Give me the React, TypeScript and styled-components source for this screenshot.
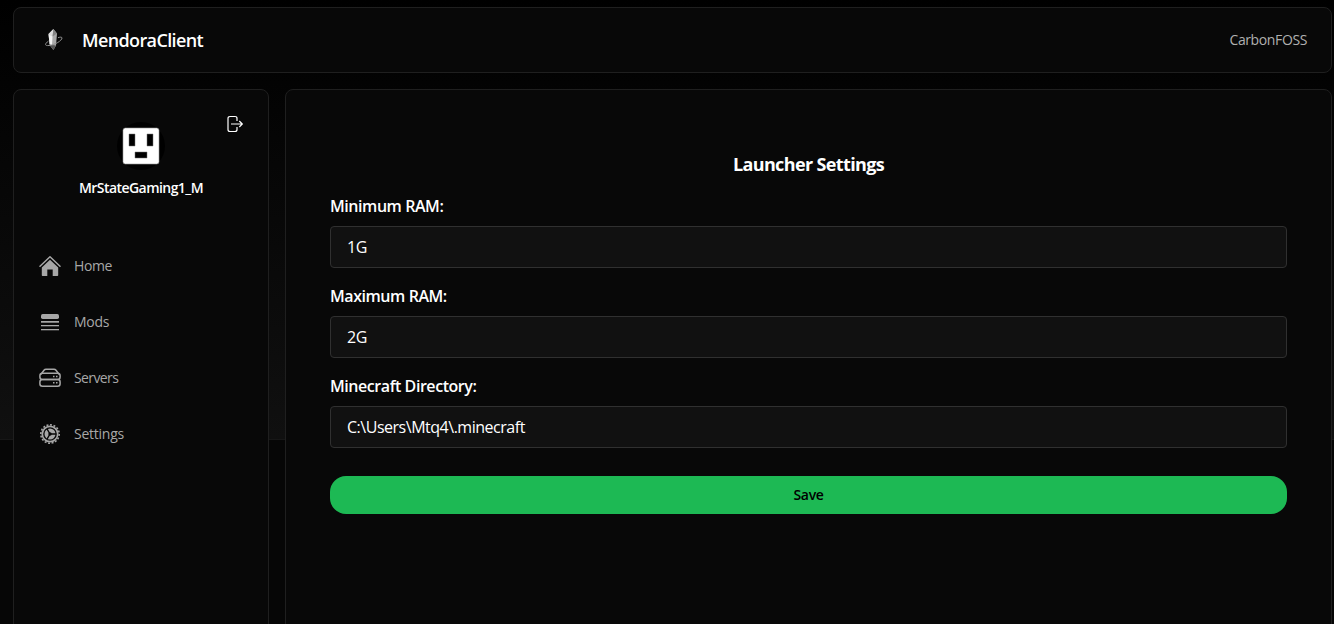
import React from "react";
import styled, { createGlobalStyle } from "styled-components";

const GlobalStyle = createGlobalStyle`
  * { box-sizing: border-box; }
  body {
    margin: 0;
    overflow: hidden;
    background: #060606;
    color: #fff;
    font-family: "Segoe UI", "Open Sans", "Noto Sans", sans-serif;
  }
`;

const Page = styled.div`
  height: 624px;
  padding: 7px 2px 0 13px;
  display: flex;
  flex-direction: column;
  gap: 16px;
  overflow: hidden;
  background: linear-gradient(#000, #101010) 0 0 / 100% 439px no-repeat,
    linear-gradient(#171717, #171717) 0 439px / 100% 1px no-repeat, #060606;
`;

const Panel = styled.div`
  background: #080808;
  border: 1px solid #1f1f1f;
  border-radius: 8px;
`;

const Header = styled(Panel)`
  height: 66px;
  flex: none;
  display: flex;
  align-items: center;
  padding: 0 24px 0 28px;
`;

const Label = styled.span<{ $size: number; $weight?: number; $track?: number; $color?: string }>`
  font-size: ${(p) => p.$size}px;
  font-weight: ${(p) => p.$weight ?? 400};
  letter-spacing: ${(p) => p.$track ?? 0}px;
  color: ${(p) => p.$color ?? "#fff"};
  line-height: 20px;
  white-space: nowrap;
`;

const Brand = styled.div`
  flex: 1;
  display: flex;
  align-items: center;
  gap: 16px;
`;

const Body = styled.div`
  flex: none;
  height: 560px;
  display: flex;
  gap: 16px;
`;

const Sidebar = styled(Panel)`
  width: 256px;
  flex: none;
`;

const Profile = styled.div`
  position: relative;
  padding-top: 32px;
  height: 148px;
  display: flex;
  flex-direction: column;
  align-items: center;
  gap: 8px;
`;

const Avatar = styled.div`
  width: 48px;
  height: 48px;
  border-radius: 50%;
  background: #000;
  display: grid;
  place-items: center;
`;

const LogoutButton = styled.button`
  position: absolute;
  top: 25px;
  right: 24px;
  padding: 0;
  border: 0;
  background: none;
  display: flex;
`;

const Nav = styled.nav`
  display: flex;
  flex-direction: column;
`;

const NavItem = styled.a`
  height: 56px;
  padding-left: 25px;
  display: flex;
  align-items: center;
  gap: 13px;
  color: #a7a7a7;
  svg { width: 22px; height: 22px; }
`;

const Main = styled(Panel)`
  flex: 1;
  padding: 64px 44px 0;
  display: flex;
  flex-direction: column;
`;

const Title = styled.h2`
  margin: 0 0 22px;
  height: 20px;
  line-height: 20px;
  font-size: 18px;
  font-weight: 700;
  letter-spacing: -0.63px;
  text-align: center;
`;

const Field = styled.label`
  height: 90px;
  display: flex;
  flex-direction: column;
  gap: 10px;
`;

const Input = styled.input`
  height: 42px;
  width: 100%;
  padding: 0 16px;
  border: 1px solid #303030;
  border-radius: 4px;
  background: #111;
  color: #fff;
  font: 16px "Segoe UI", "Open Sans", "Noto Sans", sans-serif;
  letter-spacing: -0.48px;
  outline: none;
`;

const SaveButton = styled.button`
  height: 38px;
  margin-top: 10px;
  padding: 0 0 1px;
  border: 0;
  border-radius: 16px;
  background: #1db954;
  font: 600 14px "Segoe UI", "Open Sans", "Noto Sans", sans-serif;
  letter-spacing: -0.35px;
  color: #000;
`;

const CrystalLogo = () => (
  <svg width="24" height="24" viewBox="0 0 24 24">
    <path d="M11.4 1 15 5.5 14 17.5 11.4 22 7.6 17 6.5 6z" fill="#aaa" />
    <path d="M11.4 1 6.5 6l4 2.5z" fill="#dedede" />
    <path d="M11.4 1 10.5 8.5 15 5.5z" fill="#858585" />
    <path d="m6.5 6 4 2.5L10 17l-2.4-1z" fill="#f2f2f2" />
    <path d="m10 17 4 .5-2.6 4.5-3.8-5z" fill="#555" />
    <path d="M6.5 13C2.5 16 2.5 18 7 17.5 13 17 20 12.5 20 10c0-1.2-2-1-4-.3" fill="none" stroke="#909090" strokeWidth="1" />
  </svg>
);

const FaceIcon = () => (
  <svg width="38" height="38" viewBox="0 0 38 38">
    <rect x="1" y="1" width="36" height="36" rx="2.5" fill="#fff" stroke="#999" strokeWidth=".6" />
    <path d="M7 7h6v12H7zM25 7h6v12h-6zM13 25h12v6H13z" fill="#000" stroke="#777" strokeWidth=".5" />
  </svg>
);

const LogoutIcon = () => (
  <svg width="18" height="18" viewBox="0 0 18 18" fill="none" stroke="#fff" strokeWidth="1.2">
    <path d="M11 6V3.5c0-1.3-.7-2-2-2H4c-1.3 0-2 .7-2 2v11c0 1.300.7 2 2 2h5c1.300 0 2-.7 2-2V12M5 9h11.300M13.300 6l3 3-3 3" />
  </svg>
);

const HomeIcon = () => (
  <svg viewBox="0 0 22 22">
    <path d="M1 11.300 11 1.700l10 9.600" fill="none" stroke="currentColor" strokeWidth="1.500" strokeLinecap="round" strokeLinejoin="round" />
    <path d="M11 4.800 19.200 12.500V20c0 .6-.4 1-1 1h-4.500v-6.500H8.300V21H3.800c-.6 0-1-.4-1-1v-7.500z" fill="currentColor" />
  </svg>
);

const ModsIcon = () => (
  <svg viewBox="0 0 22 22" fill="currentColor">
    <rect x="2" y="3" width="18" height="5" rx="1.7" />
    <rect x="2" y="10" width="18" height="1.7" />
    <rect x="2" y="14" width="18" height="1.3" />
    <rect x="2" y="18" width="18" height="1.3" />
  </svg>
);

const ServerIcon = () => (
  <svg viewBox="0 0 22 22" fill="none" stroke="currentColor" strokeWidth="1.5">
    <rect x=".9" y="6.3" width="20.2" height="6.2" rx="2.5" />
    <rect x=".9" y="12.5" width="20.2" height="6.7" rx="2.5" />
    <path d="m2 7.200 3-4C5.600 2.400 6.200 2.200 7 2.200h8c.8 0 1.400.2 2 1l3 4" />
    <path d="M14 9.500h1.500M17 9.500h1.500M14 15.700h1.500M17 15.700h1.500" />
  </svg>
);

const SettingsIcon = () => (
  <svg viewBox="0 0 22 22" fill="none" stroke="currentColor">
    <circle cx="11" cy="11" r="9.2" strokeWidth="1.6" pathLength="32" strokeDasharray="1.1 .9" />
    <circle cx="11" cy="11" r="7.7" strokeWidth="1.7" />
    <circle cx="11" cy="11" r="5.5" fill="currentColor" stroke="none" />
    <circle cx="11" cy="11" r="1.7" fill="#080808" stroke="none" />
    <path d="M11 11h6M11 11 8 5.800M11 11l-3 5.200" stroke="#080808" strokeWidth="1.4" />
  </svg>
);

const navItems = [
  { label: "Home", track: -0.4, icon: <HomeIcon /> },
  { label: "Mods", track: -0.25, icon: <ModsIcon /> },
  { label: "Servers", track: -0.6, icon: <ServerIcon /> },
  { label: "Settings", track: -0.25, icon: <SettingsIcon /> },
];

const fields = [
  { label: "Minimum RAM:", value: "1G" },
  { label: "Maximum RAM:", value: "2G" },
  { label: "Minecraft Directory:", value: "C:\\Users\\Mtq4\\.minecraft" },
];

export default function App() {
  return (
    <>
      <GlobalStyle />
      <Page>
        <Header>
          <Brand>
            <CrystalLogo />
            <Label $size={18} $weight={600} $track={-0.63}>MendoraClient</Label>
          </Brand>
          <Label $size={14} $track={-0.38} $color="#b0b0b0">CarbonFOSS</Label>
        </Header>
        <Body>
          <Sidebar>
            <Profile>
              <Avatar><FaceIcon /></Avatar>
              <Label $size={14} $weight={600} $track={-0.55}>MrStateGaming1_M</Label>
              <LogoutButton aria-label="Log out"><LogoutIcon /></LogoutButton>
            </Profile>
            <Nav>
              {navItems.map((item) => (
                <NavItem key={item.label}>
                  {item.icon}
                  <Label $size={14} $track={item.track} $color="#a7a7a7">{item.label}</Label>
                </NavItem>
              ))}
            </Nav>
          </Sidebar>
          <Main>
            <Title>Launcher Settings</Title>
            {fields.map((field) => (
              <Field key={field.label}>
                <Label $size={16} $weight={600} $track={-0.44}>{field.label}</Label>
                <Input defaultValue={field.value} />
              </Field>
            ))}
            <SaveButton>Save</SaveButton>
          </Main>
        </Body>
      </Page>
    </>
  );
}
